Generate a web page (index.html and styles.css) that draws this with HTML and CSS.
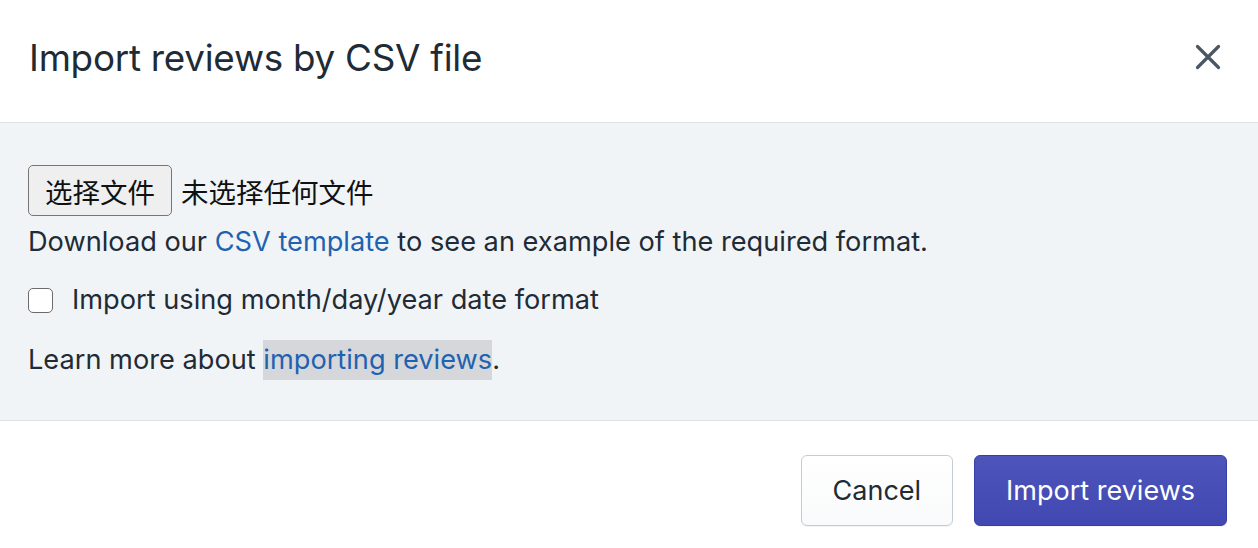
FILE: index.html
```html
<!DOCTYPE html>
<html lang="en">
<head>
    <meta charset="UTF-8">
    <meta name="viewport" content="width=device-width, initial-scale=1.0">
    <title>Import reviews</title>
    <link rel="stylesheet" href="styles.css">
</head>
<body>
    <div class="modal">
        <header class="modal-header">
            <h1>Import reviews by CSV file</h1>
            <a href="#" class="close" aria-label="Close">
                <svg width="26" height="26" viewBox="0 0 26 26">
                    <path d="M2.5 2.5 L23.5 23.5 M23.5 2.5 L2.5 23.5" stroke="#4a5662" stroke-width="3.2" stroke-linecap="round"/>
                </svg>
            </a>
        </header>

        <section class="modal-body">
            <div class="file-row">
                <button type="button" class="file-btn">选择文件</button>
                <span class="file-name">未选择任何文件</span>
            </div>
            <p class="line">Download our <a href="#">CSV template</a> to see an example of the required format.</p>
            <label class="check">
                <span class="box"></span>
                Import using month/day/year date format
            </label>
            <p class="line learn">Learn more about <a href="#" class="hl">importing reviews</a>.</p>
        </section>

        <footer class="modal-footer">
            <button type="button" class="btn">Cancel</button>
            <button type="button" class="btn primary">Import reviews</button>
        </footer>
    </div>
</body>
</html>
```

FILE: styles.css
```css
body {
    margin: 0;
    padding: 0;
    background-color: #fff;
    color: #212b36;
    font-family: Inter, "Noto Sans", sans-serif;
}

.modal {
    width: 1258px;
    height: 548px;
    display: flex;
    flex-direction: column;
}

.modal-header {
    height: 122px;
    border-bottom: 1px solid #dfe3e8;
    display: flex;
    align-items: center;
    justify-content: space-between;
    padding: 0 37px 0 29px;
}

.modal-header h1 {
    margin: 0;
    font-size: 36.8px;
    font-weight: 400;
    letter-spacing: -0.25px;
    padding-bottom: 8px;
}

.close {
    display: flex;
    padding-bottom: 8px;
}

.modal-body {
    background-color: #f1f4f7;
    height: 298px;
    border-bottom: 1px solid #dfe3e8;
    padding: 42px 28px 0;
    box-sizing: border-box;
    font-size: 27.2px;
}

.file-row {
    display: flex;
    align-items: center;
    gap: 9px;
    font-family: "Noto Sans CJK SC", sans-serif;
}

.file-btn {
    width: 144px;
    height: 51px;
    background-color: #efefef;
    border: 1.5px solid #767676;
    border-radius: 5px;
    font-family: "Noto Sans CJK SC", sans-serif;
    font-size: 27.5px;
    color: #111;
    padding: 0;
}

.file-name {
    color: #111;
    font-size: 27.5px;
}

.line {
    margin: 8px 0 0;
    line-height: 36px;
}

.line a {
    color: #1f62b0;
    text-decoration: none;
}

.check {
    display: flex;
    align-items: center;
    gap: 19px;
    margin-top: 22px;
    line-height: 36px;
}

.box {
    width: 23px;
    height: 23px;
    border: 1.5px solid #6b6b6b;
    border-radius: 5px;
    background-color: #fff;
}

.learn {
    margin-top: 22px;
    line-height: 40px;
}

.line a.hl {
    background-color: #d5d7da;
    display: inline-block;
}

.modal-footer {
    flex: 1;
    display: flex;
    justify-content: flex-end;
    align-items: flex-start;
    gap: 21px;
    padding: 34px 31px 0 0;
}

.btn {
    height: 71px;
    padding: 0 31px;
    font-family: Inter, "Noto Sans", sans-serif;
    font-size: 27px;
    color: #212b36;
    background: linear-gradient(#fff, #f9fafb);
    border: 1.5px solid #c4cdd5;
    border-radius: 6px;
    box-shadow: 0 1px 0 rgba(22,29,37,0.05);
}

.btn.primary {
    color: #fff;
    background: linear-gradient(#4d55bb, #4148b1);
    border-color: #363fa3;
}
```
